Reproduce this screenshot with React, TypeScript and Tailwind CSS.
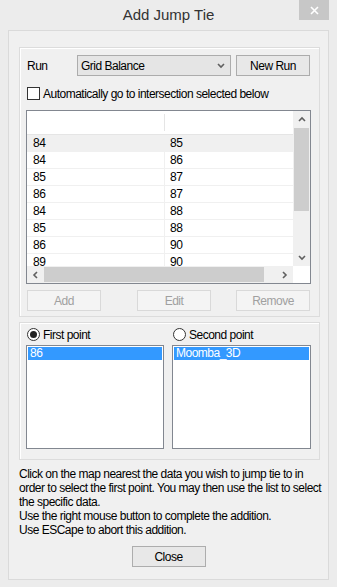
import React from "react";

const rows = [
  ["84", "85"],
  ["84", "86"],
  ["85", "87"],
  ["86", "87"],
  ["84", "88"],
  ["85", "88"],
  ["86", "90"],
  ["89", "90"],
];

function Chevron({ dir }: { dir: "up" | "down" | "left" | "right" }) {
  const paths = {
    up: "M1 5 L4 2 L7 5",
    down: "M1 2 L4 5 L7 2",
    left: "M5 1 L2 4 L5 7",
    right: "M2 1 L5 4 L2 7",
  };
  return (
    <svg width="8" height="8" viewBox="0 0 8 8">
      <path d={paths[dir]} fill="none" stroke="#606060" strokeWidth="1.6" />
    </svg>
  );
}

function WinButton({ label, disabled, className = "" }: { label: string; disabled?: boolean; className?: string }) {
  return (
    <div
      className={`flex h-[21px] w-[74px] shrink-0 items-center justify-center border ${
        disabled ? "border-[#d9d9d9] bg-[#f4f4f4] text-[#a0a0a0]" : "border-[#acacac] bg-[#e8e8e8] text-black"
      } ${className}`}
    >
      {label}
    </div>
  );
}

export default function AddJumpTie() {
  return (
    <div
      className="flex h-[587px] w-[337px] flex-col bg-[#ececec] text-[12px] text-black"
      style={{ fontFamily: '"Liberation Sans", Arial, sans-serif' }}
    >
      {/* title bar */}
      <div className="relative flex h-[30px] items-center justify-center">
        <span className="text-[15px] text-[#333]">Add Jump Tie</span>
        <div className="absolute right-[8px] top-0 flex h-[20px] w-[30px] items-center justify-center bg-[#c7c7c7]">
          <svg width="9" height="9" viewBox="0 0 9 9">
            <path d="M1 1 L8 8 M8 1 L1 8" stroke="white" strokeWidth="1.6" />
          </svg>
        </div>
      </div>

      {/* client area */}
      <div className="mx-[8px] flex h-[550px] flex-col border border-[#dadada] bg-[#f0f0f0] px-[10px] pt-[16px] tracking-[-0.5px]">
        {/* run group */}
        <div className="flex h-[270px] w-[301px] flex-col border border-[#dcdcdc] pl-[6px] pt-[7px] shadow-[inset_1px_1px_0_white]">
          <div className="flex h-[21px] items-center">
            <span className="ml-[1px] w-[50px]">Run</span>
            <div className="flex h-[21px] w-[154px] items-center justify-between border border-[#acacac] bg-[#e5e5e5] pl-[3px] pr-[5px]">
              <span>Grid Balance</span>
              <Chevron dir="down" />
            </div>
            <WinButton label="New Run" className="ml-[5px]" />
          </div>

          <div className="mt-[11px] flex h-[13px] items-center gap-[3px] pl-[1px]">
            <div className="h-[13px] w-[13px] border border-[#333] bg-white" />
            <span className="whitespace-nowrap">Automatically go to intersection selected below</span>
          </div>

          {/* list view */}
          <div className="mt-[10px] flex h-[174px] w-[285px] flex-col border border-[#828790] bg-white">
            <div className="flex h-[155px]">
              <div className="flex w-[266px] flex-col overflow-hidden">
                <div className="flex h-[24px] shrink-0 border-b border-[#e5e5e5]">
                  <div className="my-[3px] w-[138px] border-r border-[#e5e5e5]" />
                </div>
                {rows.map((r, i) => (
                  <div
                    key={i}
                    className={`flex h-[17px] shrink-0 border-b border-[#f0f0f0] ${i === 0 ? "bg-[#f0f0f0]" : ""}`}
                  >
                    <span className="w-[138px] border-r border-[#f0f0f0] pl-[6px] leading-[17px]">{r[0]}</span>
                    <span className="pl-[5px] leading-[17px]">{r[1]}</span>
                  </div>
                ))}
              </div>
              {/* vertical scrollbar */}
              <div className="flex w-[17px] flex-col bg-[#f0f0f0]">
                <div className="flex h-[17px] items-center justify-center">
                  <Chevron dir="up" />
                </div>
                <div className="mx-[1px] h-[83px] bg-[#cdcdcd]" />
                <div className="flex-1" />
                <div className="flex h-[17px] items-center justify-center">
                  <Chevron dir="down" />
                </div>
              </div>
            </div>
            {/* horizontal scrollbar */}
            <div className="flex h-[17px]">
              <div className="flex w-[266px] items-center bg-[#f0f0f0]">
                <div className="flex w-[17px] items-center justify-center">
                  <Chevron dir="left" />
                </div>
                <div className="my-[1px] h-[15px] w-[220px] bg-[#cdcdcd]" />
                <div className="flex-1" />
                <div className="flex w-[17px] items-center justify-center">
                  <Chevron dir="right" />
                </div>
              </div>
              <div className="w-[17px] bg-white" />
            </div>
          </div>

          <div className="mt-[6px] flex">
            <WinButton label="Add" disabled className="ml-[1px]" />
            <WinButton label="Edit" disabled className="ml-[36px]" />
            <WinButton label="Remove" disabled className="ml-[25px]" />
          </div>
        </div>

        {/* points group */}
        <div className="mt-[5px] flex h-[138px] w-[301px] flex-col border border-[#dcdcdc] pl-[6px] pt-[5px] shadow-[inset_1px_1px_0_white]">
          <div className="flex h-[13px] items-center">
            <div className="flex w-[146px] items-center gap-[3px] pl-[1px]">
              <div className="flex h-[13px] w-[13px] items-center justify-center rounded-full border border-[#333] bg-white">
                <div className="h-[7px] w-[7px] rounded-full bg-[#222]" />
              </div>
              <span>First point</span>
            </div>
            <div className="flex items-center gap-[3px] pl-[1px]">
              <div className="h-[13px] w-[13px] rounded-full border border-[#333] bg-white" />
              <span>Second point</span>
            </div>
          </div>
          <div className="mt-[4px] flex gap-[8px]">
            <div className="h-[104px] w-[138px] border border-[#828790] bg-white p-[1px]">
              <div className="h-[13px] bg-[#3399ff] pl-[2px] leading-[13px] text-white">86</div>
            </div>
            <div className="h-[104px] w-[139px] border border-[#828790] bg-white p-[1px]">
              <div className="h-[13px] bg-[#3399ff] pl-[2px] leading-[13px] text-white">Moomba_3D</div>
            </div>
          </div>
        </div>

        <p className="mt-[7px] whitespace-nowrap leading-[14px]">
          Click on the map nearest the data you wish to jump tie to in
          <br />
          order to select the first point. You may then use the list to select
          <br />
          the specific data.
          <br />
          Use the right mouse button to complete the addition.
          <br />
          Use ESCape to abort this addition.
        </p>

        <div className="mt-[9px] flex justify-center">
          <WinButton label="Close" className="border-[#adadad] bg-[#e5e5e5]" />
        </div>
      </div>
    </div>
  );
}
